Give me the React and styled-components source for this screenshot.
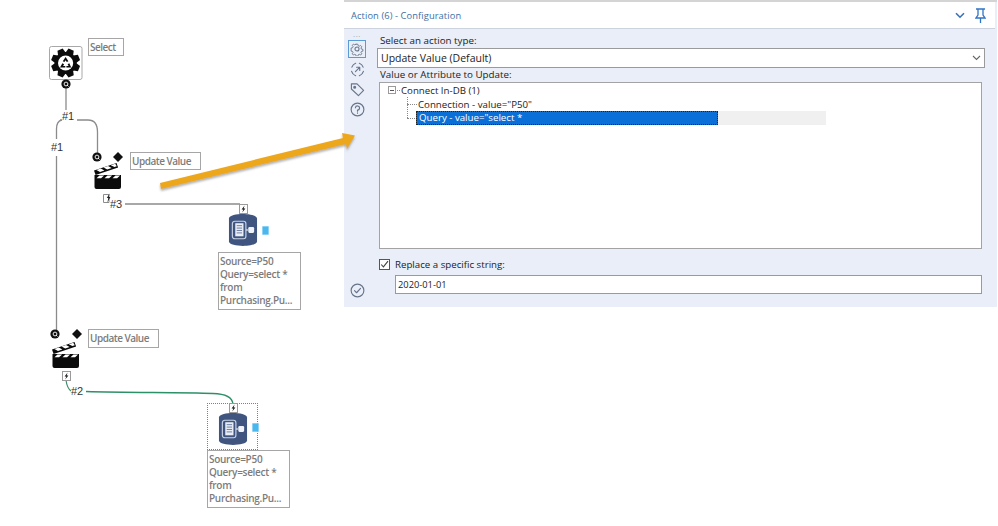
import React from "react"
import styled, { createGlobalStyle } from "styled-components"

const GlobalStyle = createGlobalStyle`
    html, body {
        margin: 0;
        padding: 0;
        background: #ffffff;
    }
    body {
        font-family: "Open Sans", "Liberation Sans", sans-serif;
    }
`

const Page = styled.div`
    position: relative;
    width: 998px;
    height: 526px;
    overflow: hidden;
    background: #ffffff;
    display: flex;
`

// Workflow canvas
const Canvas = styled.div`
    width: 344px;
    height: 526px;
    flex: none;
    position: relative;
`

const Wires = styled.svg`
    position: absolute;
    left: 0;
    top: 0;
    width: 344px;
    height: 526px;
`

const Node = styled.div`
    position: absolute;
    left: ${(p) => p.$x}px;
    top: ${(p) => p.$y}px;
    line-height: 0;
`

const Annotation = styled.div`
    position: absolute;
    left: ${(p) => p.$x}px;
    top: ${(p) => p.$y}px;
    width: ${(p) => p.$w}px;
    height: ${(p) => p.$h}px;
    box-sizing: border-box;
    border: 1px solid #a6a6a6;
    background: #ffffff;
    padding: ${(p) => (p.$wrap ? 2 : 1)}px 1px 0 1px;
    color: #7c7c7c;
    font-size: 10px;
    font-weight: 600;
    letter-spacing: ${(p) => (p.$wrap ? -0.3 : -0.5)}px;
    line-height: ${(p) => p.$lh || 15}px;
    white-space: nowrap;
    overflow: hidden;
`

const WireLabel = styled.span`
    position: absolute;
    left: ${(p) => p.$x}px;
    top: ${(p) => p.$y}px;
    font-family: "Liberation Sans", sans-serif;
    font-size: 11px;
    line-height: 12px;
    color: #333333;
`

const Selection = styled.div`
    position: absolute;
    left: 207px;
    top: 403px;
    width: 51px;
    height: 47px;
    box-sizing: border-box;
    border: 1px dotted #1a9cf2;
`

// Configuration window
const Panel = styled.section`
    width: 653px;
    height: 307px;
    flex: none;
    box-sizing: border-box;
    border-top: 2px solid #d4d4d4;
    background: #e9eef8;
    display: flex;
    flex-direction: column;
`

const TitleBar = styled.header`
    height: 27px;
    flex: none;
    margin-right: 2px;
    box-sizing: border-box;
    background: #ffffff;
    border-bottom: 1px solid #ccd2de;
    padding: 0 9px 0 7px;
    display: flex;
    align-items: center;
    justify-content: space-between;
`

const Title = styled.h1`
    margin: 0;
    font-size: 9.3px;
    font-weight: 400;
    color: #3c6fa5;
    letter-spacing: 0.1px;
`

const TitleIcons = styled.div`
    display: flex;
    align-items: center;
    gap: 10px;
    line-height: 0;
`

const PanelBody = styled.div`
    flex: 1;
    display: flex;
    min-height: 0;
`

const SideRail = styled.nav`
    width: 26px;
    flex: none;
    padding: 4px 0 6px 4px;
    box-sizing: border-box;
    display: flex;
    flex-direction: column;
    align-items: flex-start;
`

const RailDots = styled.div`
    width: 18px;
    height: 7px;
    color: #8e99ab;
    font-size: 8px;
    line-height: 5px;
    text-align: center;
    letter-spacing: 0.5px;
`

const RailButton = styled.div`
    width: 18px;
    height: 18px;
    margin-bottom: 2px;
    margin-top: ${(p) => (p.$bottom ? "auto" : "0")};
    box-sizing: border-box;
    border: 1px solid ${(p) => (p.$active ? "#5b9bd5" : "transparent")};
    display: flex;
    align-items: center;
    justify-content: center;
    line-height: 0;
`

const Form = styled.div`
    flex: 1;
    min-width: 0;
    padding: 5px 12px 0 7px;
    display: flex;
    flex-direction: column;
`

const FieldLabel = styled.label`
    font-size: 9.8px;
    line-height: 14px;
    color: #222222;
    padding-left: 3px;
`

const Select = styled.div`
    height: 20px;
    box-sizing: border-box;
    border: 1px solid #9a9a9a;
    background: #ffffff;
    padding: 0 3px;
    display: flex;
    align-items: center;
    justify-content: space-between;
    font-size: 10.5px;
    color: #222222;
`

const Tree = styled.div`
    height: 167px;
    margin: 0 3px 0 2px;
    flex: none;
    box-sizing: border-box;
    border: 1px solid #a3a3a3;
    background: #ffffff;
    position: relative;
`

const TreeRow = styled.div`
    height: 14px;
    display: flex;
    align-items: center;
    padding-left: ${(p) => p.$indent}px;
    font-size: 9.7px;
    color: #222222;
    white-space: nowrap;
`

const Expander = styled.span`
    width: 8px;
    height: 8px;
    box-sizing: border-box;
    border: 1px solid #9a9a9a;
    margin-right: 1px;
    position: relative;
    flex: none;

    &:after {
        content: "";
        position: absolute;
        left: 1px;
        right: 1px;
        top: 2.5px;
        height: 1px;
        background: #555555;
    }
`

const Dotted = styled.span`
    width: ${(p) => p.$w}px;
    border-top: 1px dotted #888888;
    margin-right: 1px;
    flex: none;
`

const TreeSpine = styled.span`
    position: absolute;
    left: 27px;
    top: 14px;
    height: 21px;
    border-left: 1px dotted #888888;
`

const SelectedText = styled.span`
    width: 302px;
    height: 14px;
    box-sizing: border-box;
    border: 1px dotted #222222;
    background: #0a6fd6;
    color: #ffffff;
    line-height: 12px;
    padding-left: 2px;
    flex: none;
`

const SelectedTail = styled.span`
    width: 108px;
    height: 14px;
    background: #f0f0f0;
    flex: none;
`

const CheckRow = styled.div`
    margin: 9px 0 0 2px;
    height: 12px;
    display: flex;
    align-items: center;
    gap: 5px;
    font-size: 9.7px;
    color: #222222;
`

const CheckBox = styled.span`
    width: 11px;
    height: 11px;
    box-sizing: border-box;
    border: 1px solid #555555;
    background: #ffffff;
    flex: none;
    line-height: 0;
`

const TextInput = styled.div`
    height: 19px;
    margin: 5px 3px 0 18px;
    box-sizing: border-box;
    border: 1px solid #9a9a9a;
    background: #ffffff;
    padding-left: 2px;
    font-size: 9.3px;
    line-height: 17px;
    color: #222222;
`

const ArrowLayer = styled.svg`
    position: absolute;
    left: 150px;
    top: 125px;
    width: 215px;
    height: 72px;
    pointer-events: none;
`

// Tool icons
const Anchor = () => (
    <svg width="10" height="10" viewBox="0 0 10 10">
        <circle cx="5" cy="5" r="4.6" fill="#111" />
        <circle cx="5" cy="5" r="1.9" fill="none" stroke="#fff" strokeWidth="0.9" />
        <path d="M6 6l1.5 1.5" stroke="#fff" strokeWidth="0.9" />
    </svg>
)

const Diamond = () => (
    <svg width="10" height="10" viewBox="0 0 10 10">
        <path d="M5 0l5 5-5 5-5-5z" fill="#111" />
    </svg>
)

const gearTeeth = [0, 45, 90, 135, 180, 225, 270, 315]

const GearTool = () => (
    <svg width="34" height="34" viewBox="0 0 34 34">
        <rect x="0.5" y="0.5" width="32.5" height="33" rx="2" fill="#fff" stroke="#a8a8a8" />
        <g transform="translate(16.6 17)">
            {gearTeeth.map((a) => (
                <path key={a} d="M-2.8-14.5h5.6l1.6 6h-8.8z" fill="#0b0b0b" transform={`rotate(${a + 22.5})`} />
            ))}
            <circle r="11" fill="#0b0b0b" />
            <circle r="7.6" fill="#fff" />
            <path d="M0-6l2.8 4.2-1.6 .9-1.2-1.9-1.2 1.9-1.6-.9z" fill="#0b0b0b" />
            <path d="M-5.6 4.6l2.4-4.4 1.7 1-1 1.8h2.2v1.6z" fill="#0b0b0b" />
            <path d="M5.6 4.6h-4.8v-1.6h2.2l-1-1.8 1.7-1z" fill="#0b0b0b" />
        </g>
    </svg>
)

const ClapTool = () => (
    <svg width="28" height="27" viewBox="0 0 28 27">
        <path d="M0 8.5l22.5-7.5 1.6 4.4-22.5 7.5z" fill="#0b0b0b" />
        <path d="M2.4 8l4.4-1.5 3.6 2-4.4 1.5zM9.6 5.6l4.4-1.5 3.6 2-4.4 1.5zM16.8 3.2l4.4-1.5 1.6 2.6-2.4.8z" fill="#fff" />
        <path d="M0.5 13h26.5v4H0.5z" fill="#0b0b0b" />
        <path d="M2.5 16.2l3-2.6h4.6l-3 2.6zM10.5 16.2l3-2.6h4.6l-3 2.6zM18.5 16.2l3-2.6h4.6l-3 2.6z" fill="#fff" />
        <path d="M0.5 17H27v8a2 2 0 0 1-2 2H2.5a2 2 0 0 1-2-2z" fill="#0b0b0b" />
    </svg>
)

const BoltBox = () => (
    <svg width="9" height="10" viewBox="0 0 9 10">
        <rect x="0.5" y="0.5" width="8" height="9" fill="#fff" stroke="#9a9a9a" />
        <path d="M5.6 1.4L2.6 5.4h1.8L3.2 8.6l3.2-4.2H4.6z" fill="#111" />
    </svg>
)

const DatabaseTool = () => (
    <svg width="30" height="34" viewBox="0 0 31 34">
        <path d="M1 5C1 2 9 0.5 15.5 0.5S30 2 30 5v24c0 3-8 4.5-14.5 4.5S1 32 1 29z" fill="#3f5580" />
        <rect x="4.5" y="8" width="14" height="18" rx="2.5" fill="none" stroke="#c9d3e6" strokeWidth="1.2" />
        <rect x="7.5" y="10" width="8.5" height="13.5" fill="#e9edf5" />
        <path d="M9 12.5h5.5M9 15h5.5M9 17.5h5.5M9 20h5.5" stroke="#5d7098" strokeWidth="0.9" />
        <path d="M18.5 17H21" stroke="#e6ebf3" strokeWidth="1.2" />
        <rect x="21" y="14" width="6" height="6" rx="1.2" fill="#eef2f8" />
    </svg>
)

const OutputPort = () => (
    <svg width="7" height="9" viewBox="0 0 7 9">
        <rect x="0.3" y="0.3" width="6.4" height="8.4" rx="0.8" fill="#4ab8ef" stroke="#9ad8f6" strokeWidth="0.6" />
    </svg>
)

const DocBolt = () => (
    <svg width="9" height="11" viewBox="0 0 9 11">
        <path d="M0.5 1.5h5.5v8h-5.5z" fill="#fff" stroke="#8c8c8c" />
        <path d="M6.6 0.4L3.8 5h1.5L4.4 9.4 7.4 4H5.8z" fill="#222" />
    </svg>
)

// Panel icons
const PanelIcon = ({ children, size = 15 }) => (
    <svg width={size} height={size} viewBox="0 0 16 16" fill="none" stroke="#667489" strokeWidth="1.2" strokeLinecap="round" strokeLinejoin="round">
        {children}
    </svg>
)

const Label = () => (
    <>
        Source=P50
        <br />
        Query=select *
        <br />
        from
        <br />
        Purchasing.Pu...
    </>
)

function App() {
    return (
        <Page>
            <GlobalStyle />
            <Canvas>
                <Wires viewBox="0 0 344 526">
                    <g fill="none" stroke="#8b8b8b" strokeWidth="1.3">
                        <path d="M66 88V110" />
                        <path d="M60 120H62Q56.5 121 56.5 129V139" />
                        <path d="M77 120H88Q97.5 120 97.5 132V153" />
                        <path d="M56.5 156V331" />
                        <path d="M125 204H240" />
                    </g>
                    <path d="M66 380Q67 388 71 391" fill="none" stroke="#3e8f6d" strokeWidth="1.2" />
                    <path d="M86 391.5C130 393 180 392 213 393.5Q232 394 233 404" fill="none" stroke="#2e9068" strokeWidth="1.4" />
                </Wires>

                <Node $x={49} $y={46}><GearTool /></Node>
                <Annotation $x={88} $y={38} $w={36} $h={18}>Select</Annotation>
                <Node $x={61} $y={79}><Anchor /></Node>
                <WireLabel $x={62} $y={110}>#1</WireLabel>
                <WireLabel $x={51} $y={141}>#1</WireLabel>

                <Node $x={92} $y={152}><Anchor /></Node>
                <Node $x={113} $y={152}><Diamond /></Node>
                <Node $x={94} $y={162}><ClapTool /></Node>
                <Annotation $x={130} $y={152} $w={71} $h={18}>Update Value</Annotation>
                <Node $x={103} $y={193}><DocBolt /></Node>
                <WireLabel $x={110} $y={198}>#3</WireLabel>

                <Node $x={239} $y={204}><BoltBox /></Node>
                <Node $x={228} $y={213}><DatabaseTool /></Node>
                <Node $x={262} $y={226}><OutputPort /></Node>
                <Annotation $x={218} $y={252} $w={83} $h={58} $wrap $lh={13}>
                    <Label />
                </Annotation>

                <Node $x={50} $y={329}><Anchor /></Node>
                <Node $x={72} $y={329}><Diamond /></Node>
                <Node $x={52} $y={341}><ClapTool /></Node>
                <Annotation $x={88} $y={329} $w={71} $h={19}>Update Value</Annotation>
                <Node $x={62} $y={371}><BoltBox /></Node>
                <WireLabel $x={71} $y={385}>#2</WireLabel>

                <Selection />
                <Node $x={229} $y={403}><BoltBox /></Node>
                <Node $x={218} $y={412}><DatabaseTool /></Node>
                <Node $x={252} $y={423}><OutputPort /></Node>
                <Annotation $x={207} $y={450} $w={83} $h={58} $wrap $lh={13}>
                    <Label />
                </Annotation>
            </Canvas>

            <Panel>
                <TitleBar>
                    <Title>Action (6) - Configuration</Title>
                    <TitleIcons>
                        <svg width="10" height="7" viewBox="0 0 10 7" fill="none" stroke="#3d6fb4" strokeWidth="1.6">
                            <path d="M1 1.2l4 4 4-4" />
                        </svg>
                        <svg width="11" height="15" viewBox="0 0 11 15" fill="none" stroke="#2f74c8" strokeWidth="1.3">
                            <path d="M1 1h9M3 1v6L1 10h9L8 7V1M5.5 10v5" />
                        </svg>
                    </TitleIcons>
                </TitleBar>
                <PanelBody>
                    <SideRail>
                        <RailDots>···</RailDots>
                        <RailButton $active>
                            <PanelIcon size={14}>
                                <circle cx="8" cy="8" r="2.3" />
                                <path d="M6.8 1.5h2.4l.4 2 1.5.7 1.8-1 1.6 1.7-1.1 1.7.6 1.5 2 .4v2.4l-2 .4-.6 1.5 1.1 1.7-1.6 1.7-1.8-1-1.5.7-.4 2H6.8l-.4-2-1.5-.7-1.8 1-1.6-1.7 1.1-1.7-.6-1.5-2-.4V6.6l2-.4.6-1.5-1.1-1.7 1.6-1.7 1.8 1 1.5-.7z" transform="translate(1.3 1.3) scale(.84)" />
                            </PanelIcon>
                        </RailButton>
                        <RailButton>
                            <PanelIcon>
                                <path d="M2 5.5A7 7 0 0 1 6 1.4M10 1.4A7 7 0 0 1 14 5.5M14.3 10A7 7 0 0 1 10 14.6M6 14.6A7 7 0 0 1 1.7 10" />
                                <path d="M5.8 10.2L10.2 5.8M7 5.6h3.4V9" />
                            </PanelIcon>
                        </RailButton>
                        <RailButton>
                            <PanelIcon>
                                <path d="M1.5 2h6l7 7-5.5 5.5-7.5-7z" />
                                <circle cx="5" cy="5.5" r="1" fill="#667489" />
                            </PanelIcon>
                        </RailButton>
                        <RailButton>
                            <PanelIcon>
                                <circle cx="8" cy="8" r="6.8" />
                                <path d="M5.8 6.2A2.2 2.2 0 1 1 8 8.6V9.8M8 11.6v.4" />
                            </PanelIcon>
                        </RailButton>
                        <RailButton $bottom>
                            <PanelIcon>
                                <circle cx="8" cy="8" r="6.8" />
                                <path d="M4.8 8.2l2.2 2.2 4.2-4.6" />
                            </PanelIcon>
                        </RailButton>
                    </SideRail>
                    <Form>
                        <FieldLabel>Select an action type:</FieldLabel>
                        <Select>
                            Update Value (Default)
                            <svg width="9" height="6" viewBox="0 0 9 6" fill="none" stroke="#666" strokeWidth="1.1">
                                <path d="M1 1l3.5 3.5L8 1" />
                            </svg>
                        </Select>
                        <FieldLabel>Value or Attribute to Update:</FieldLabel>
                        <Tree>
                            <TreeSpine />
                            <TreeRow $indent={8}>
                                <Expander />
                                <Dotted $w={3} />
                                Connect In-DB (1)
                            </TreeRow>
                            <TreeRow $indent={27}>
                                <Dotted $w={10} />
                                Connection - value="P50"
                            </TreeRow>
                            <TreeRow $indent={27}>
                                <Dotted $w={8} />
                                <SelectedText>Query - value="select *</SelectedText>
                                <SelectedTail />
                            </TreeRow>
                        </Tree>
                        <CheckRow>
                            <CheckBox>
                                <svg width="9" height="9" viewBox="0 0 9 9" fill="none" stroke="#444" strokeWidth="1.1">
                                    <path d="M1.2 4.5l2.2 2.4L8 1.2" />
                                </svg>
                            </CheckBox>
                            Replace a specific string:
                        </CheckRow>
                        <TextInput>2020-01-01</TextInput>
                    </Form>
                </PanelBody>
            </Panel>

            <ArrowLayer viewBox="150 125 215 72">
                <defs>
                    <filter id="arrowShade" x="-5%" y="-30%" width="110%" height="180%">
                        <feDropShadow dx="0" dy="2" stdDeviation="1.2" floodColor="#666" floodOpacity="0.5" />
                    </filter>
                </defs>
                <path
                    d="M160 183L343 138L342 133L355 135.5L347 149L346 144L161 189z"
                    fill="#eda71c"
                    filter="url(#arrowShade)"
                />
            </ArrowLayer>
        </Page>
    )
}

export default App
